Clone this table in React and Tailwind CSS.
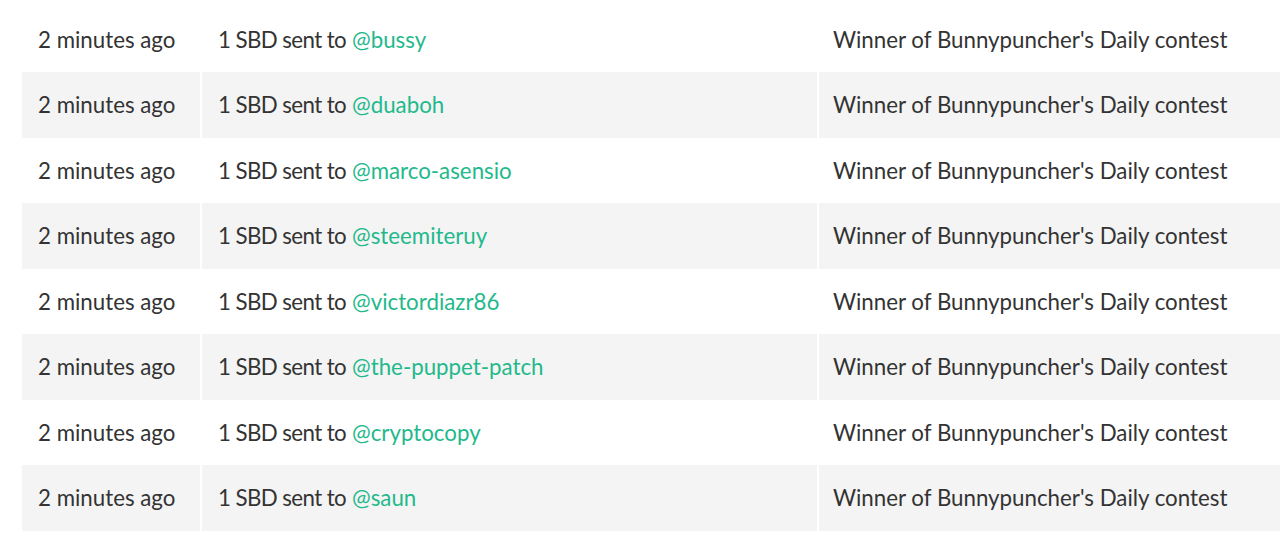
const rows = [
  'bussy',
  'duaboh',
  'marco-asensio',
  'steemiteruy',
  'victordiazr86',
  'the-puppet-patch',
  'cryptocopy',
  'saun',
]

export default function App() {
  return (
    <div
      className="bg-white w-[1280px] h-[538px] overflow-hidden pl-[22px] pt-[6.5px] text-[#333] text-[22.3px]"
      style={{ fontFamily: 'Lato, "Open Sans", sans-serif' }}
    >
      {rows.map((name, i) => (
        <div
          key={name}
          className={`flex h-[65.5px] items-center ${i % 2 === 1 ? 'bg-[#f4f4f4]' : 'bg-white'}`}
        >
          <div className="w-[180px] h-full flex items-center pl-4 border-r-2 border-white">
            2 minutes ago
          </div>
          <div className="w-[617px] h-full flex items-center pl-[16px] border-r-2 border-white">
            <span className="tracking-[-0.6px] mr-[6px]">1 SBD sent to</span>
            <a href="#" className="text-[#1fb98c]">
              @{name}
            </a>
          </div>
          <div className="flex-1 h-full flex items-center pl-[14px]">
            Winner of Bunnypuncher's Daily contest
          </div>
        </div>
      ))}
    </div>
  )
}
